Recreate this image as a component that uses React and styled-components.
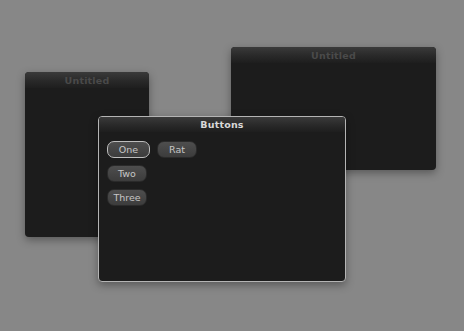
import React from "react";
import styled, { createGlobalStyle } from "styled-components";

const GlobalStyle = createGlobalStyle`
    html, body {
        margin: 0;
        padding: 0;
        background: #878787;
        font-family: "DejaVu Sans", "Liberation Sans", sans-serif;
    }
`;

const Desktop = styled.div`
    position: relative;
    width: 464px;
    height: 331px;
    overflow: hidden;
    background: #878787;
`;

const Window = styled.div`
    position: absolute;
    left: ${({ x }) => x}px;
    top: ${({ y }) => y}px;
    width: ${({ w }) => w}px;
    height: ${({ h }) => h}px;
    display: flex;
    flex-direction: column;
    background: #1c1c1c;
    border-radius: 4px;
    box-sizing: border-box;
    border: ${({ active }) => (active ? "1.5px solid #b4b4b4" : "none")};
    box-shadow: 0 3px 8px rgba(0, 0, 0, 0.35);
    overflow: hidden;
`;

const TitleBar = styled.div`
    height: ${({ active }) => (active ? 15 : 16)}px;
    flex-shrink: 0;
    display: flex;
    align-items: center;
    justify-content: center;
    background: linear-gradient(#3a3a3a, #292929 55%, #1e1e1e);
    font-size: 9.5px;
    font-weight: bold;
    letter-spacing: 0.2px;
    color: ${({ active }) => (active ? "#d8d8d8" : "#4a4a4a")};
`;

const Content = styled.div`
    flex: 1;
    display: grid;
    grid-template-columns: 43px 40px;
    grid-auto-rows: 17px;
    column-gap: 7px;
    row-gap: 7px;
    align-content: start;
    padding: 9px 0 0 8px;
`;

const Button = styled.div`
    box-sizing: border-box;
    height: 17px;
    display: flex;
    align-items: center;
    justify-content: center;
    border-radius: 7px;
    background: linear-gradient(#4e4e4e, #3c3c3c);
    border: ${({ focused }) => (focused ? "1.5px solid #bdbdbd" : "1px solid #2a2a2a")};
    width: ${({ w }) => w}px;
    font-size: 9.5px;
    color: #c6c6c6;
`;

export default function App() {
    return (
        <>
            <GlobalStyle />
            <Desktop>
                <Window x={25} y={72} w={124} h={165}>
                    <TitleBar>Untitled</TitleBar>
                </Window>
                <Window x={231} y={47} w={205} h={123}>
                    <TitleBar>Untitled</TitleBar>
                </Window>
                <Window x={98} y={116} w={248} h={166} active>
                    <TitleBar active>Buttons</TitleBar>
                    <Content>
                        <Button focused w={43}>One</Button>
                        <Button w={40}>Rat</Button>
                        <Button w={40}>Two</Button>
                        <span />
                        <Button w={40}>Three</Button>
                    </Content>
                </Window>
            </Desktop>
        </>
    );
}
